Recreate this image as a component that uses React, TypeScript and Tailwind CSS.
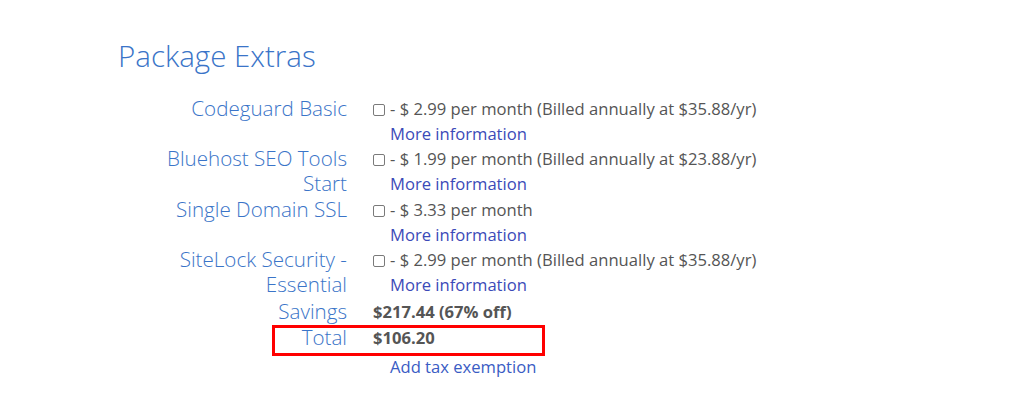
const extras = [
  { label: "Codeguard Basic", price: "2.99", billed: "(Billed annually at $35.88/yr)", gap: "" },
  { label: "Bluehost SEO Tools Start", price: "1.99", billed: "(Billed annually at $23.88/yr)", gap: "" },
  { label: "Single Domain SSL", price: "3.33", billed: "", gap: "mt-px" },
  { label: "SiteLock Security - Essential", price: "2.99", billed: "(Billed annually at $35.88/yr)", gap: "" },
];

function Row({ label, children, className = "" }: { label: string; children: React.ReactNode; className?: string }) {
  return (
    <div className={`flex gap-[26px] ${className}`}>
      <div className="w-[229px] shrink-0 pl-[20px] text-right text-[20.6px] font-light leading-[25px] text-[#3a74c8]">{label}</div>
      <div className="text-[16.6px] leading-[25px] text-[#555]">{children}</div>
    </div>
  );
}

export default function App() {
  return (
    <div className="min-h-[416px] bg-white pl-[118px] pt-[36px] font-['Open_Sans',sans-serif]">
      <h2 className="text-[29.5px] font-light leading-[40px] text-[#3a74c8]">Package Extras</h2>

      <div className="mt-[20px]">
        {extras.map((x) => (
          <Row key={x.label} label={x.label} className={x.gap}>
            <div>
              <span className="mr-[5px] inline-block h-[12px] w-[12px] rounded-[2px] border border-[#7a7a7a] align-[-1px]" />
              - $ {x.price} per month {x.billed}
            </div>
            <a href="#" className="block pl-[17px] text-[#3b4ab8]">More information</a>
          </Row>
        ))}

        <Row label="Savings" className="mt-[2px]">
          <span className="font-bold">$217.44 (67% off)</span>
        </Row>

        <div className="relative mt-px">
          <Row label="Total">
            <span className="font-bold">$106.20</span>
          </Row>
          <div className="absolute left-[154px] top-0 h-[31px] w-[273px] border-[3px] border-[#ff0000]" />
        </div>

        <div className="mt-[4px] pl-[272px] text-[16.6px] leading-[25px]">
          <a href="#" className="text-[#3a5cc4]">Add tax exemption</a>
        </div>
      </div>
    </div>
  );
}
